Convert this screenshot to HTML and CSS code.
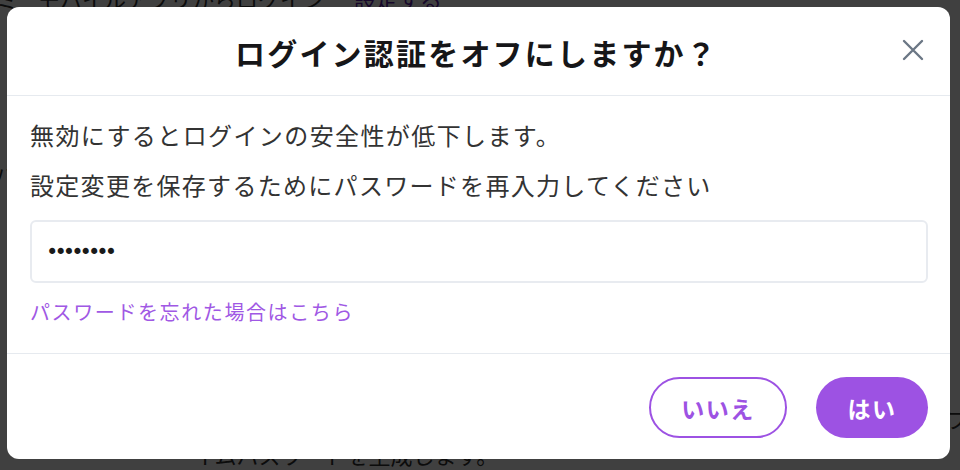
FILE: index.html
```html
<!DOCTYPE html>
<html lang="ja">
<head>
<meta charset="utf-8">
<link rel="stylesheet" href="styles.css">
</head>
<body>
<div class="page">
  <p class="bg-line bg-top">ミ<span class="bg-gap"></span>モバイルアプリからログイン<span class="bg-link">設定する</span></p>
  <p class="bg-line bg-mid">バ</p>
  <p class="bg-line bg-right">フ</p>
  <p class="bg-line bg-bottom">イムパスワードを生成します。</p>
</div>
<div class="overlay">
  <div class="modal">
    <div class="modal-header">
      <h1 class="modal-title">ログイン認証をオフにしますか？</h1>
      <button class="close" aria-label="閉じる">
        <svg width="22" height="22" viewBox="0 0 22 22"><path d="M2 2 L20 20 M20 2 L2 20" stroke="#6b7785" stroke-width="2.4" stroke-linecap="round" fill="none"/></svg>
      </button>
    </div>
    <div class="modal-body">
      <p class="text">無効にするとログインの安全性が低下します。</p>
      <p class="text second">設定変更を保存するためにパスワードを再入力してください</p>
      <div class="input"><span class="dots">••••••••</span></div>
      <a class="forgot">パスワードを忘れた場合はこちら</a>
    </div>
    <div class="modal-footer">
      <button class="btn btn-outline">いいえ</button>
      <button class="btn btn-solid">はい</button>
    </div>
  </div>
</div>
</body>
</html>
```

FILE: styles.css
```css
* { box-sizing: border-box; }
html, body {
  margin: 0;
  width: 960px;
  height: 470px;
  overflow: hidden;
}
body {
  position: relative;
  font-family: "Noto Sans CJK JP", "Noto Sans", sans-serif;
  background: #ffffff;
}
.page {
  width: 960px;
  height: 470px;
  color: #333;
  font-size: 22px;
}
.bg-line { margin: 0; line-height: 24px; white-space: nowrap; }
.bg-top { padding-top: 0; margin-top: -14px; margin-left: -4px; }
.bg-gap { display: inline-block; width: 20px; }
.bg-link { color: #5b1fa8; margin-left: 30px; }
.bg-mid { margin-top: 152px; margin-left: -6px; }
.bg-right { margin-top: 220px; margin-left: 946px; }
.bg-bottom { margin-top: 12px; margin-left: 193px; }

.overlay {
  position: absolute;
  inset: 0;
  background: rgba(0, 0, 0, 0.75);
  padding: 7px 0 0 7px;
}
.modal {
  width: 943px;
  height: 452px;
  background: #fff;
  border-radius: 12px;
  display: flex;
  flex-direction: column;
}
.modal-header {
  height: 89px;
  border-bottom: 1px solid #e6eaef;
  display: flex;
  align-items: center;
  justify-content: center;
  position: relative;
}
.modal-title {
  margin: 0;
  font-size: 30px;
  font-weight: 700;
  color: #161618;
  letter-spacing: 2.2px;
  padding-top: 2px;
  padding-right: 4px;
}
.close {
  position: absolute;
  right: 26px;
  top: 32px;
  border: 0;
  background: none;
  padding: 0;
  width: 22px;
  height: 22px;
  display: flex;
}
.modal-body {
  padding: 21px 22px 0 23px;
  border-bottom: 1px solid #e6eaef;
  height: 258px;
}
.text {
  margin: 0;
  font-size: 24px;
  line-height: 36px;
  color: #333333;
  letter-spacing: 1.4px;
}
.text.second { margin-top: 14px; letter-spacing: 1.3px; }
.input {
  margin-top: 17px;
  height: 63px;
  border: 2px solid #e8ebf0;
  border-radius: 6px;
  display: flex;
  align-items: center;
  padding-left: 14px;
}
.dots {
  font-family: "DejaVu Sans", sans-serif;
  font-size: 21px;
  letter-spacing: -4px;
  color: #1a1a1a;
}
.forgot {
  display: block;
  margin-top: 14px;
  font-size: 20px;
  line-height: 30px;
  color: #a058e4;
  letter-spacing: 1.6px;
}
.modal-footer {
  flex: 1;
  display: flex;
  justify-content: flex-end;
  align-items: flex-start;
  gap: 29px;
  padding: 23px 22px 0 0;
}
.btn {
  height: 61px;
  border-radius: 31px;
  font-family: "Noto Sans CJK JP", sans-serif;
  font-size: 23px;
  font-weight: 700;
  letter-spacing: 1.5px;
  display: flex;
  align-items: center;
  justify-content: center;
}
.btn-outline {
  width: 138px;
  background: #fff;
  border: 2px solid #9d52e3;
  color: #9d52e3;
}
.btn-solid {
  width: 112px;
  background: #9d52e3;
  border: 0;
  color: #fff;
}
```
